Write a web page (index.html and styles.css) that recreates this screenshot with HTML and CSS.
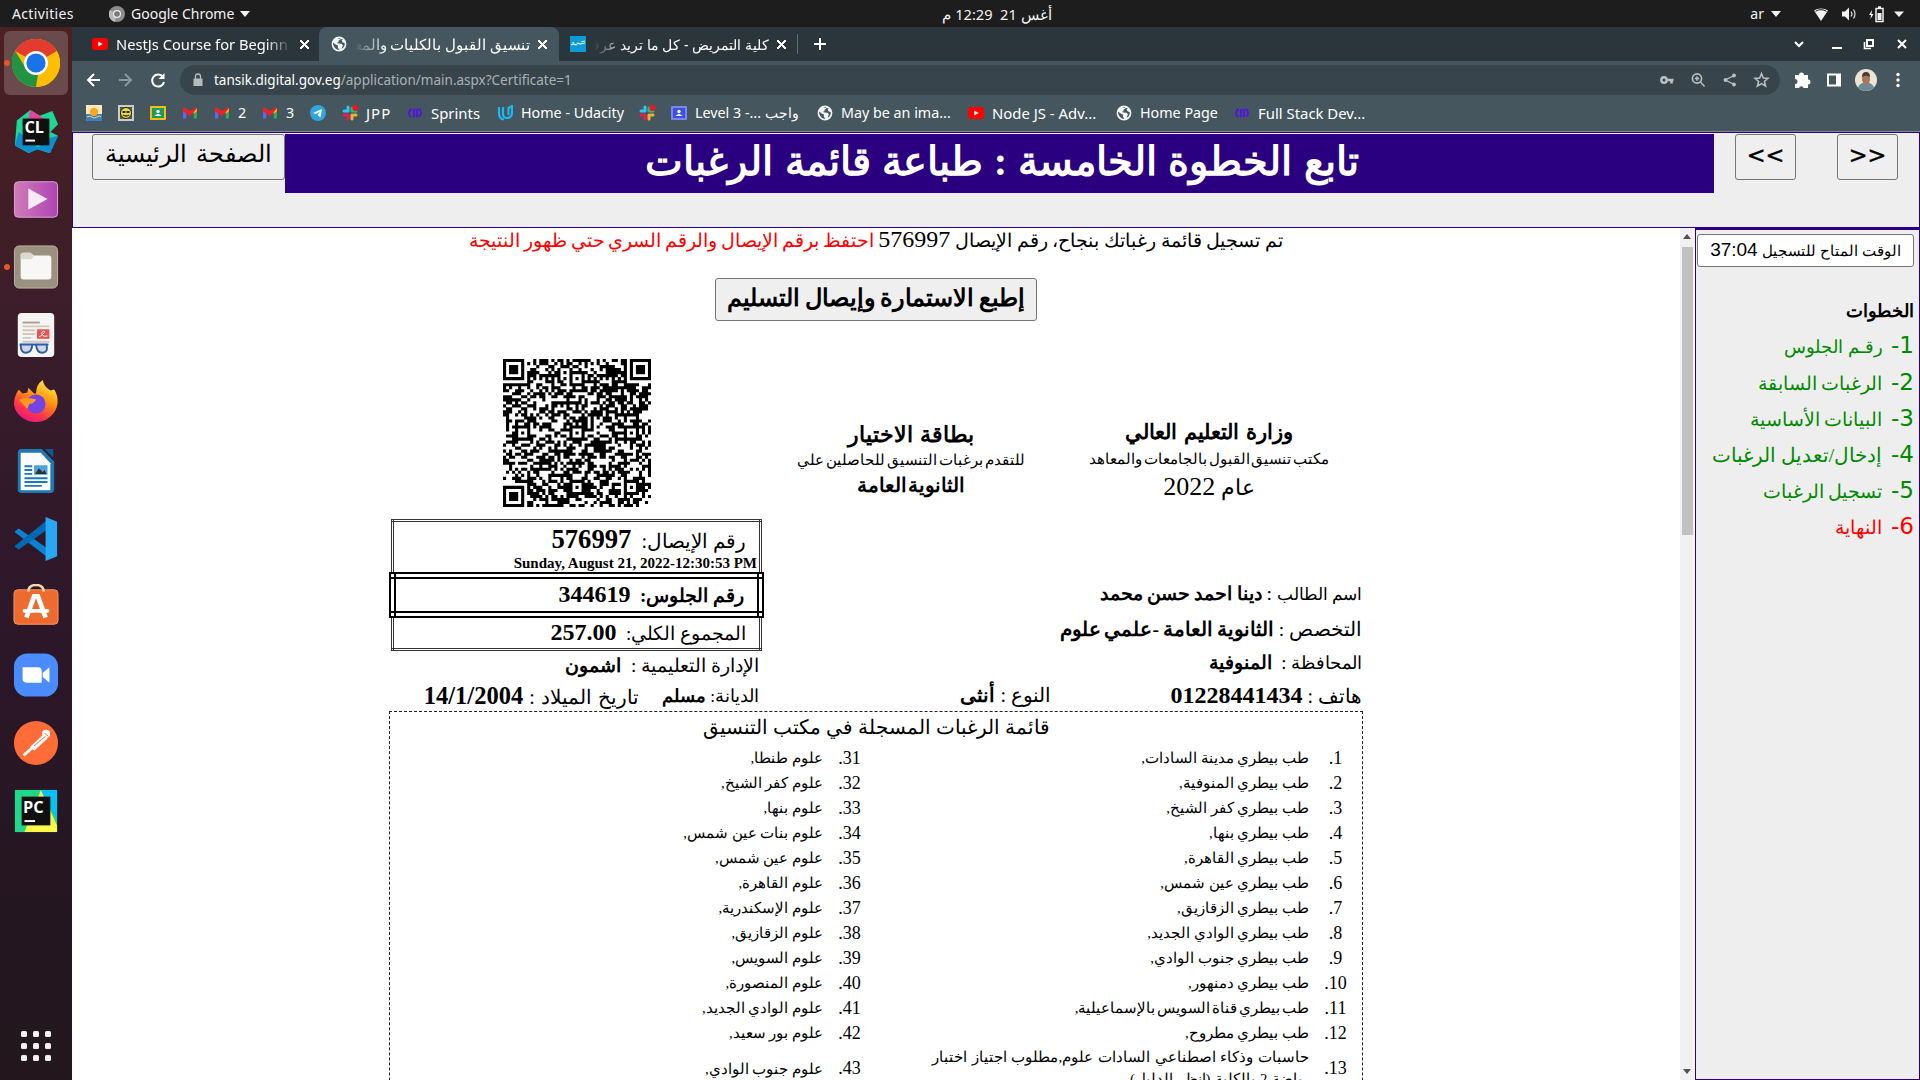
FILE: index.html
```html
<!DOCTYPE html>
<html lang="ar">
<head>
<meta charset="utf-8">
<title>تنسيق القبول بالكليات والمعاهد</title>
<link rel="stylesheet" href="styles.css">
</head>
<body>
<svg width="0" height="0" class="defs">
  <symbol id="i-yt" viewBox="0 0 16 16"><rect y="2" width="16" height="12" rx="3" fill="#f00"/><path d="M6.3 5.6v4.8L10.6 8z" fill="#fff"/></symbol>
  <symbol id="i-globe" viewBox="0 0 16 16"><circle cx="8" cy="8" r="7.4" fill="#f4f5f5"/><path d="M2 6.500l3 2.200 1.800.6v2l1.400 2.600C4.500 13.700 2 10.500 2 6.500zM6.200 2.400L8.800 2l.7 1.600-2 1.200v1.400L5.600 7l2.400.6 2.400.2 1.600 1.500-1.500 3.500c2.200-1 3.500-3.200 3.300-5.600l-2.300-1-.8-1.600 1.100-1.300" fill="#45565e"/></symbol>
  <symbol id="i-gmail" viewBox="0 0 16 16"><path d="M1 4v9.500h3.300V7z" fill="#5a6bf0"/><path d="M15 4v9.500h-3.300V7z" fill="#34a853"/><path d="M11.700 4.300L15 3v3.200l-3.300 2.500z" fill="#fbbc04"/><path d="M1 6.200V3.600C1 2.500 2.300 2 3.200 2.700L8 6.300l4.800-3.600C13.700 2 15 2.500 15 3.600L8 10.900z" fill="#f01f2a"/></symbol>
  <symbol id="i-slack" viewBox="0 0 16 16" fill="none"><g stroke-width="3" stroke-linecap="round"><path d="M6 2v4M2 6h2" stroke="#36c5f0"/><path d="M10 6h4M10 6V3" stroke="#2eb67d"/><path d="M10 10v4M12 10h2" stroke="#ecb22e"/><path d="M2 10h4M6 11v3" stroke="#e01e5a"/></g><circle cx="13.500" cy="3" r="3" fill="#f5121c"/></symbol>
  <symbol id="i-sprints" viewBox="0 0 16 16"><path d="M5 4.500Q2 5 2 8T4 12M8.500 4Q6 5 7 8T6 12.200M9 12Q11 11 10 8t1.500-4M12 11.500q2-1 2-3.500T12.500 4" stroke="#5310ea" stroke-width="1.800" fill="none"/></symbol>
</svg>

<header class="topbar">
  <span class="activities">Activities</span>
  <svg class="app-ico" viewBox="0 0 16 16"><circle cx="8" cy="8" r="8" fill="#8d8d8d"/><path d="M8 8L1 4a8 8 0 0 0 5 12z" fill="#b9b9b9"/><circle cx="8" cy="8" r="4" fill="#eee"/><circle cx="8" cy="8" r="2.800" fill="#777"/></svg>
  <span class="app-name">Google Chrome</span><i class="caret"></i>
  <span class="clock" dir="rtl">أغس 21&nbsp; 12:29 م</span>
  <span class="lang">ar</span><i class="caret lang-caret"></i>
  <svg class="sys" viewBox="0 0 100 20"><path d="M2 6.500a10 7 0 0 1 14 0L9 17z" fill="#f2f2f2"/><path d="M3.500 7.300a8 6 0 0 1 11 0" stroke="#1d1d1d" fill="none"/><path d="M30 7.500h3l4-4v13l-4-4h-3z" fill="#f2f2f2"/><path d="M39 7.500q2 2.500 0 5M41.500 5.500q3 4.500 0 9" stroke="#ddd" fill="none" stroke-width="1.200"/><path d="M60 6l-3 5h2l-.5 4 3-5h-2z" fill="#f2f2f2"/><path d="M64 4.500h7v13h-7zM66 3h3" fill="none" stroke="#f2f2f2" stroke-width="1.500"/><path d="M65.500 9h4v7h-4z" fill="#f2f2f2"/><path d="M82 7.500h10l-5 5.500z" fill="#f2f2f2"/></svg>
</header>

<div class="desktop">
<nav class="dock">
  <div class="slot active"><i class="pip"></i><svg viewBox="0 0 48 48"><circle cx="24" cy="24" r="24" fill="#fdbd00"/><path d="M24 24L3.200 12A24 24 0 0 1 44.800 12z" fill="#e33b2e"/><path d="M3.200 12L14 29.500l10 5.500 2 .5L24 48A24 24 0 0 1 3.200 12z" fill="#229342"/><path d="M24 48l10.400-18L44.800 12A24 24 0 0 1 24 48z" fill="#fdbd00"/><circle cx="24" cy="24" r="12" fill="#fff"/><circle cx="24" cy="24" r="9.600" fill="#1a73e8"/></svg></div>
  <div class="slot"><svg viewBox="0 0 48 48"><path d="M4 13l14-11 10 6 13-5 6 14-8 8 8 4-9 18-13-4-9 4L2 39z" fill="#1fd796"/><path d="M2 39l4-14 20 16 13-10 8-2-8 18-13-4-9 4z" fill="#0a8fd0"/><path d="M18 2l-2 10h18z" fill="#e8439b"/><rect x="10" y="11" width="28" height="28" fill="#101010"/><rect x="13" y="33" width="10" height="2" fill="#fff"/><text x="12" y="26" class="logo-t">CL</text></svg></div>
  <div class="slot"><svg viewBox="0 0 48 48"><defs><linearGradient id="g1"><stop offset="0" stop-color="#cf7cb8"/><stop offset="1" stop-color="#ae45b4"/></linearGradient></defs><rect x="1.500" y="6" width="45" height="37" rx="4" fill="url(#g1)" stroke="#e0a5da"/><path d="M16 13v22l20-11z" fill="#f5eaf6"/></svg></div>
  <div class="slot"><i class="pip"></i><svg viewBox="0 0 48 48"><rect x="1.500" y="2" width="45" height="44" rx="5" fill="#9b917f" stroke="#bdb5a4"/><path d="M8 12q0-3 3-3h7l4 3h15q3 0 3 3v19q0 3-3 3H11q-3 0-3-3z" fill="#f8f7f6"/><path d="M8 12q0-3 3-3h7l4 3-3 4H8z" fill="#dcd8cf"/></svg></div>
  <div class="slot"><svg viewBox="0 0 48 48"><rect x="5" y="1" width="38" height="46" rx="4" fill="#f6f5f4"/><path d="M10 11h18" stroke="#aaa08f" stroke-width="2"/><path d="M10 15h28M10 19h13M10 23h13M10 27h9M10 31h28" stroke="#cfc9bd" stroke-width="2"/><rect x="25" y="18" width="13" height="10" fill="#ed5353"/><path d="M27 26c3-1 8-6 5-6s-3 7 4 5" stroke="#fff" fill="none"/><path d="M7 34h30" stroke="#2a5db0" stroke-width="2" fill="none"/><path d="M8 34q0 9 6 8.500t6-8.500zM24 34q1 9 7 8.500t4-8.500z" fill="#cfd8e4" stroke="#2a5db0" stroke-width="2"/></svg></div>
  <div class="slot"><svg viewBox="0 0 48 48"><defs><linearGradient id="g2" x1=".8" y1="0" x2=".3" y2="1"><stop offset="0" stop-color="#fff44f"/><stop offset=".4" stop-color="#ff980e"/><stop offset=".75" stop-color="#ff3647"/><stop offset="1" stop-color="#e31587"/></linearGradient></defs><path d="M6 10l4 4 5-1 1-5 6 6h2q0-9 7-14 1 7 8 11l4-1q4 6 3.500 14A23 22 0 0 1 1 26q0-9 5-16z" fill="url(#g2)"/><circle cx="24" cy="25" r="10" fill="#7542e5"/><path d="M6 20q8-2 18 0-1 4-7 5l-2 5q-5-5-9-10z" fill="#ff9a1f"/></svg></div>
  <div class="slot"><svg viewBox="0 0 48 48"><path d="M9 1h21l13 13v29q0 4-4 4H9q-4 0-4-4V5q0-4 4-4z" fill="#1b79b3"/><path d="M33 1h9v9z" fill="#0d5c91"/><path d="M8 5h21l10 11v28H8z" fill="#fbfbfb"/><path d="M12 19h8M12 23h8M12 27h8M12 31.500h24M12 35.500h24M12 39.500h18" stroke="#1b79b3" stroke-width="2"/><rect x="22" y="18" width="14" height="10" fill="#4ea4dc"/><path d="M23 27l4-6 4 4 2-2 2 4z" fill="#2e3436"/></svg></div>
  <div class="slot"><svg viewBox="0 0 48 48"><path d="M2 16l4-3 30 21v9L2 17z" fill="#0a84d0"/><path d="M2 32l4 3L36 14V4L2 31z" fill="#0069b1"/><path d="M34 1l12 5v36l-12 5z" fill="#28a7f2"/></svg></div>
  <div class="slot"><svg viewBox="0 0 48 48"><rect x="1" y="6" width="46" height="36" rx="4" fill="#ee6b2f" stroke="#f59a67"/><path d="M16 8q0-7 8-7t8 7" fill="none" stroke="#f3d9ab" stroke-width="2.500"/><path d="M14 35l8-22h4l8 22" fill="none" stroke="#fff" stroke-width="5"/><path d="M12 28h24" stroke="#fff" stroke-width="4" stroke-linecap="round"/></svg></div>
  <div class="slot"><svg viewBox="0 0 48 48"><rect x="1" y="1.500" width="46" height="45" rx="14" fill="#4a8cfd"/><path d="M10 16h16q4 0 4 4v12H14q-4 0-4-4z" fill="#fff"/><path d="M31 22l7-6v16l-7-6z" fill="#fff"/></svg></div>
  <div class="slot"><svg viewBox="0 0 48 48"><circle cx="24" cy="24" r="23" fill="#ff6c37"/><path d="M34 17L20 30" stroke="#fff" stroke-width="6"/><path d="M20 29L11 37" stroke="#fff" stroke-width="3"/><circle cx="34.500" cy="14.500" r="4.200" fill="#fff"/><path d="M22 27l12-10M33 14l4 3" stroke="#ff6c37"/></svg></div>
  <div class="slot"><svg viewBox="0 0 48 48"><rect x="2" y="2" width="44" height="44" fill="#21d789"/><path d="M28 2h18v31z" fill="#07c3f2"/><path d="M29 2l17 37v7H12z" fill="#fcf84a"/><rect x="9" y="9" width="30" height="30" fill="#101010"/><rect x="12" y="33.500" width="11" height="2" fill="#fff"/><text x="10.500" y="26" class="logo-t">PC</text></svg></div>
  <svg class="apps" viewBox="0 0 30 30" fill="#f2f1f0"><rect width="6" height="6" rx="1.500"/><rect x="12" width="6" height="6" rx="1.500"/><rect x="24" width="6" height="6" rx="1.500"/><rect y="12" width="6" height="6" rx="1.500"/><rect x="12" y="12" width="6" height="6" rx="1.500"/><rect x="24" y="12" width="6" height="6" rx="1.500"/><rect y="24" width="6" height="6" rx="1.500"/><rect x="12" y="24" width="6" height="6" rx="1.500"/><rect x="24" y="24" width="6" height="6" rx="1.500"/></svg>
</nav>

<div class="browser">
  <div class="tabs">
    <div class="tab"><svg class="ico"><use href="#i-yt"/></svg><span class="tab-t">NestJs Course for Beginn</span><b class="x"></b></div>
    <div class="tab current"><svg class="ico"><use href="#i-globe"/></svg><span class="tab-t" dir="rtl">تنسيق القبول بالكليات والمعـ</span><b class="x"></b></div>
    <div class="tab third"><svg class="ico" viewBox="0 0 16 16"><rect width="16" height="16" fill="#0a9bd8"/><path d="M1 9l3-1 2 1 2-2 2 1 5-1M2 7l2-.5M11 6l4-1" stroke="#d5f0fb" fill="none" stroke-width="1.200"/></svg><span class="tab-t" dir="rtl">كلية التمريض - كل ما تريد عرف</span><b class="x"></b></div>
    <svg class="plus" viewBox="0 0 12 12"><path d="M6 0v12M0 6h12" stroke="#fff" stroke-width="2"/></svg>
    <svg class="win" viewBox="0 0 120 20"><path d="M6 8l4 4 4-4" stroke="#fff" stroke-width="2" fill="none"/><path d="M43 14h10" stroke="#fff" stroke-width="2"/><path d="M78 6h6v6h-6z" stroke="#fff" stroke-width="2" fill="none"/><path d="M75.500 8v6.500H82" stroke="#fff" stroke-width="1.600" fill="none"/><path d="M109 6l8 8M117 6l-8 8" stroke="#fff" stroke-width="2"/></svg>
  </div>
  <div class="toolbar">
    <svg class="nav" viewBox="0 0 96 30" fill="none" stroke="#fff" stroke-width="2"><path d="M21 15H9M15 9l-6 6 6 6"/><path d="M40 15h12M46 9l6 6-6 6" stroke="#8b979c"/><path d="M84 12a6 6 0 1 0 1 5"/><path d="M85.500 8v6h-6z" fill="#fff" stroke="none"/></svg>
    <div class="omnibox">
      <svg class="lock" viewBox="0 0 10 14"><path d="M.5 5.500h9V13h-9z" fill="#b4bbbf"/><path d="M2.500 6V3.500a2.500 2.500 0 0 1 5 0V6" stroke="#b4bbbf" fill="none" stroke-width="1.300"/></svg>
      <span class="url">tansik.digital.gov.eg<i>/application/main.aspx?Certificate=1</i></span>
      <svg class="omni-r" viewBox="0 0 120 24" fill="none" stroke="#b9c0c4" stroke-width="1.600"><circle cx="8" cy="12" r="2.700" stroke-width="2.400"/><path d="M11 12h6.500M15.500 12v3.500" stroke-width="2.600"/><circle cx="41" cy="10.500" r="4.600"/><path d="M44.500 14l4 4.500M38.800 10.500h4.400M41 8.300v4.400" stroke-width="1.400"/><path d="M78 7.500l-8.500 4.500 8.500 4.500" stroke-width="1.400"/><g fill="#b9c0c4" stroke="none"><circle cx="78" cy="7.500" r="1.900"/><circle cx="69.500" cy="12" r="1.900"/><circle cx="78" cy="16.500" r="1.900"/></g><path d="M105.500 5.500l1.800 4.500 4.700.4-3.600 3.100 1.200 4.700-4.100-2.600-4.100 2.600 1.200-4.700-3.600-3.100 4.700-.4z" stroke-width="1.500"/></svg>
    </div>
    <svg class="ext" viewBox="0 0 120 30"><path d="M5 10h4a2.500 2.500 0 1 1 5 0h4v4.500a2.500 2.500 0 1 1 0 5V23h-4.500a2.300 2.300 0 0 0-4.500 0H5v-4a2.300 2.300 0 0 0 0-5z" fill="#fff"/><path d="M38 9.500h12v11H38z" fill="none" stroke="#fff" stroke-width="2"/><path d="M46 9h5v12h-5z" fill="#fff"/><circle cx="76" cy="15" r="11" fill="#e9e4d6"/><path d="M68 22.500q2-5 8-5t8 5a11 11 0 0 1-16 0z" fill="#6d8a94"/><ellipse cx="76" cy="14" rx="4" ry="5.500" fill="#a87756"/><path d="M72 12q0-5 4-5t4 5l-4-1.500z" fill="#463a33"/><g fill="#fff"><circle cx="108" cy="9.500" r="1.700"/><circle cx="108" cy="15" r="1.700"/><circle cx="108" cy="20.500" r="1.700"/></g></svg>
  </div>
  <div class="bookmarks">
    <a><svg class="ico" viewBox="0 0 16 16"><rect width="16" height="9" fill="#fbe9bd"/><rect y="9" width="16" height="7" fill="#3f7fbf"/><circle cx="8" cy="7" r="4" fill="#fba61b"/><path d="M1 12q3-2 5 0t5 0 4 0" stroke="#f4d37b" fill="none"/></svg></a>
    <a><svg class="ico" viewBox="0 0 16 16"><rect width="16" height="16" fill="#ccc"/><rect x="2" y="2" width="12" height="12" fill="#555"/><circle cx="8" cy="8" r="5.500" fill="#eae32a" stroke="#222"/><path d="M4.500 7h3M8.500 7h3" stroke="#222" stroke-width="2"/><path d="M5 10q3 2 6 0" stroke="#222" fill="none" stroke-width="1.300"/></svg></a>
    <a><svg class="ico" viewBox="0 0 16 16"><rect y="1" width="16" height="14" rx="1" fill="#f7ba17"/><rect x="2" y="3" width="12" height="10" fill="#1d9b5b"/><circle cx="8" cy="6.500" r="1.700" fill="#fff"/><path d="M4.500 11q3.500-4 7 0z" fill="#fff"/></svg></a>
    <a><svg class="ico"><use href="#i-gmail"/></svg></a>
    <a><svg class="ico"><use href="#i-gmail"/></svg>2</a>
    <a><svg class="ico"><use href="#i-gmail"/></svg>3</a>
    <a><svg class="ico" viewBox="0 0 16 16"><circle cx="8" cy="8" r="8" fill="#31a5e0"/><path d="M3 8l9-4-1.500 8.500L7.500 10l3-4-4.500 3z" fill="#fff"/></svg></a>
    <a class="caps"><svg class="ico"><use href="#i-slack"/></svg>JPP</a>
    <a class="wide"><svg class="ico"><use href="#i-sprints"/></svg>Sprints</a>
    <a><svg class="ico" viewBox="0 0 16 16" fill="none" stroke="#1fb6f2" stroke-width="2.200"><path d="M2 2v6q0 6 5 6.500"/><path d="M6 2v7q0 4 4 4 5 0 5-6V1l-3.500 2v7"/></svg>Home - Udacity</a>
    <a><svg class="ico"><use href="#i-slack"/></svg></a>
    <a><svg class="ico" viewBox="0 0 16 16"><rect y="1" width="16" height="14" rx="1" fill="#7a86f5"/><rect x="2" y="3" width="12" height="10" fill="#3c4fe0"/><circle cx="8" cy="6.500" r="1.700" fill="#fff"/><path d="M4.500 11q3.500-4 7 0z" fill="#fff"/></svg><span>Level 3 -... واجب</span></a>
    <a><svg class="ico"><use href="#i-globe"/></svg>May be an ima...</a>
    <a class="wide"><svg class="ico"><use href="#i-yt"/></svg>Node JS - Adv...</a>
    <a><svg class="ico"><use href="#i-globe"/></svg>Home Page</a>
    <a class="wide"><svg class="ico"><use href="#i-sprints"/></svg>Full Stack Dev...</a>
  </div>

  <div class="page">
    <div class="banner">
      <button class="home">الصفحة الرئيسية</button>
      <h1 dir="rtl">تابع الخطوة الخامسة : طباعة قائمة الرغبات</h1>
      <button class="step">&lt;&lt;</button>
      <button class="step last">&gt;&gt;</button>
    </div>
    <div class="frames">
      <main dir="rtl">
        <p class="msg">تم تسجيل قائمة رغباتك بنجاح، رقم الإيصال <span class="n">576997</span> <span class="red">احتفظ برقم الإيصال والرقم السري حتي ظهور النتيجة</span></p>
        <button class="print">إطبع الاستمارة وإيصال التسليم</button>
        <div class="head">
          <div class="org"><b>وزارة التعليم العالي</b><span class="sm">مكتب تنسيق القبول بالجامعات والمعاهد</span><span class="yr">عام <span class="n">2022</span></span></div>
          <div class="card"><b>بطاقة الاختيار</b><span class="sm">للتقدم برغبات التنسيق للحاصلين علي</span><b class="b2">الثانوية العامة</b></div>
          <svg class="qr" viewBox="0 0 49 49"><path id="qr"/></svg>
        </div>
        <div class="info">
          <div class="who">
            <p class="name"><span class="tight">اسم الطالب</span> : <b>دينا احمد حسن محمد</b></p>
            <p class="track"><span class="loose">التخصص</span> : <b>الثانوية العامة -علمي علوم</b></p>
            <p class="gov"><span class="tight">المحافظة</span> :&nbsp; <b>المنوفية</b></p>
            <p class="pair"><span class="tel">هاتف : <b class="n">01228441434</b></span><span>النوع : <b>أنثى</b></span></p>
          </div>
          <div class="side">
            <table class="receipt">
              <tr class="r1"><td><p>رقم الإيصال:&nbsp; <b class="n">576997</b></p><b class="date" dir="ltr">Sunday, August 21, 2022-12:30:53 PM</b></td></tr>
              <tr class="r2"><td><b>رقم الجلوس:&nbsp; <span class="n">344619</span></b></td></tr>
              <tr class="r3"><td>المجموع الكلي:&nbsp; <b class="n">257.00</b></td></tr>
            </table>
            <p class="l1">الإدارة التعليمية :&nbsp; <b>اشمون</b></p>
            <p class="l2"><span>الديانة: <b>مسلم</b></span><span class="born">تاريخ الميلاد : <b class="n">14/1/2004</b></span></p>
          </div>
        </div>
        <div class="wishes">
          <h2>قائمة الرغبات المسجلة في مكتب التنسيق</h2>
          <div class="rows">
            <i>1.</i><span>طب بيطري مدينة السادات,</span><i>31.</i><span>علوم طنطا,</span>
            <i>2.</i><span>طب بيطري المنوفية,</span><i>32.</i><span>علوم كفر الشيخ,</span>
            <i>3.</i><span>طب بيطري كفر الشيخ,</span><i>33.</i><span>علوم بنها,</span>
            <i>4.</i><span>طب بيطري بنها,</span><i>34.</i><span>علوم بنات عين شمس,</span>
            <i>5.</i><span>طب بيطري القاهرة,</span><i>35.</i><span>علوم عين شمس,</span>
            <i>6.</i><span>طب بيطري عين شمس,</span><i>36.</i><span>علوم القاهرة,</span>
            <i>7.</i><span>طب بيطري الزقازيق,</span><i>37.</i><span>علوم الإسكندرية,</span>
            <i>8.</i><span>طب بيطري الوادي الجديد,</span><i>38.</i><span>علوم الزقازيق,</span>
            <i>9.</i><span>طب بيطري جنوب الوادي,</span><i>39.</i><span>علوم السويس,</span>
            <i>10.</i><span>طب بيطري دمنهور,</span><i>40.</i><span>علوم المنصورة,</span>
            <i>11.</i><span class="suez">طب بيطري قناة السويس بالإسماعيلية,</span><i>41.</i><span>علوم الوادي الجديد,</span>
            <i>12.</i><span>طب بيطري مطروح,</span><i>42.</i><span>علوم بور سعيد,</span>
            <i>13.</i><span class="two">حاسبات وذكاء اصطناعي السادات علوم,مطلوب اجتياز اختبار<br>رياضة 2 بالكلية (انظر الدليل)</span><i>43.</i><span>علوم جنوب الوادي,</span>
          </div>
        </div>
      </main>
      <div class="scroll"><i class="up"></i><i class="thumb"></i><i class="down"></i></div>
      <aside dir="rtl">
        <div class="timer">الوقت المتاح للتسجيل <span class="n">37:04</span></div>
        <h3>الخطوات</h3>
        <p class="first"><i>1-</i> رقـم الجلوس</p>
        <p><i>2-</i> الرغبات السابقة</p>
        <p><i>3-</i> البيانات الأساسية</p>
        <p class="long"><i>4-</i> إدخال/تعديل الرغبات</p>
        <p><i>5-</i> تسجيل الرغبات</p>
        <p class="red"><i>6-</i> النهاية</p>
      </aside>
    </div>
  </div>
</div>
</div>
<script src="script.js"></script>
</body>
</html>
```
FILE: styles.css
```css
*{box-sizing:border-box}
body{margin:0;height:1080px;overflow:hidden;display:flex;flex-direction:column;font-family:"Noto Sans","Open Sans",sans-serif;font-size:14px;color:#fff;background:#1d1d1d}
.defs{position:absolute}
p,h1,h2,h3{margin:0;font-weight:400}
i{font-style:normal}
button{font:inherit;color:#000;background:#efefef;border:1px solid #767676;border-radius:3px;padding:0}

.topbar{height:27px;flex:none;display:flex;align-items:center;color:#f2f2f2;background:#1d1d1d}
.activities{margin-left:12px;width:97px;letter-spacing:.35px}
.app-ico{width:16px;height:16px;margin-right:6px}
.app-name{width:104px;white-space:nowrap}
.caret{border:5px solid transparent;border-top:6px solid #f2f2f2;border-bottom:0;margin-left:5px}
.clock{margin-left:687px;width:120px;text-align:center;font-size:14.600px;white-space:nowrap}
.lang{margin-left:auto}
.lang-caret{margin-left:7px;margin-right:31px}
.sys{width:100px;height:20px;margin-right:8px}

.desktop{flex:1;display:flex;min-height:0}
.dock{width:72px;flex:none;display:flex;flex-direction:column;align-items:center;background:linear-gradient(#4a2023,#3b1d2a 28%,#2d172a 55%,#241620 85%,#23171d);padding-top:2px}
.slot{width:64px;height:64px;margin:2px 0;border-radius:6px;display:flex;align-items:center;justify-content:center;position:relative}
.slot svg{width:46px;height:46px}
.active{background:#6b4a4c}
.active svg{width:48px;height:48px}
.pip{position:absolute;left:0;top:29px;width:6px;height:6px;border-radius:50%;background:#e95420}
.logo-t{font:bold 17px "Open Sans",sans-serif;fill:#fff}
.apps{width:30px;height:30px;margin-top:auto;margin-bottom:19px}

.browser{flex:1;display:flex;flex-direction:column;min-width:0;background:#45565e}
.ico{width:16px;height:16px;flex:none}
.tabs{height:34px;flex:none;display:flex;background:#2b363c}
.tab{width:247px;padding:0 10px 0 20px;display:flex;align-items:center;gap:8px;font-size:14.700px}
.current{width:240px;padding:0 12px 0 12px;background:#45565e;border-radius:8px 8px 0 0;font-size:14.600px}
.third{width:239px;padding:0 0 0 11px;font-size:14.200px}
.third .x{margin-right:3px}
.third::after{content:"";width:1px;height:20px;background:#5f6b71}
.tab-t{flex:1;overflow:hidden;white-space:nowrap;-webkit-mask:linear-gradient(90deg,#000 85%,transparent)}
.tab-t[dir=rtl]{-webkit-mask:linear-gradient(270deg,#000 82%,transparent)}
.x{width:9px;height:9px;flex:none;background:linear-gradient(45deg,transparent 43%,#fff 43% 57%,transparent 57%),linear-gradient(-45deg,transparent 43%,#fff 43% 57%,transparent 57%)}
.plus{width:12px;height:12px;margin:11px 0 0 16px}
.win{width:120px;height:20px;margin:7px 11px 0 auto}
.toolbar{height:38px;flex:none;display:flex;align-items:center;padding-bottom:1px}
.nav{width:96px;height:30px;margin:0 4px 0 7px}
.omnibox{width:1600px;height:30px;border-radius:15px;margin-left:1px;background:#38444b;display:flex;align-items:center;padding:0 4px 0 13px}
.lock{width:10px;height:14px;margin-right:11px}
.url{flex:1;font-size:13.500px}
.url i{color:#a9b2b6}
.omni-r{width:120px;height:24px}
.ext{width:120px;height:30px;margin-left:10px}
.bookmarks{height:32.500px;flex:none;padding:0 0 4px 14px;display:grid;grid-template-columns:32px 32px 32px 32px 48px 48px 32px 65px 90px 142px 32px 146px 151px 148px 118px 140px;border-bottom:1px solid #7d8a90;align-items:center;font-size:14.300px}
.bookmarks a{display:flex;align-items:center;gap:8px;white-space:nowrap}
.bookmarks .wide{font-size:14.900px}
.bookmarks .caps{font-size:15px;letter-spacing:1px}

.page{flex:1;display:flex;flex-direction:column;color:#000;background:#fff;min-height:0;font-family:"Liberation Serif",serif}
.banner{height:96px;flex:none;display:flex;align-items:flex-start;background:#eee;border:1px solid #2a0080;padding:1px 20px 0 19px}
.home{width:193px;height:46px;font-size:24.400px;word-spacing:3px;padding-bottom:6px}
.banner h1{width:1429px;height:59px;background:#2a0080;color:#fff;font-weight:700;font-size:40.400px;word-spacing:1px;line-height:56px;text-align:center;padding-left:5px}
.banner .step{width:61px;height:46px;margin-left:21px;font:22.500px "DejaVu Sans",sans-serif;-webkit-text-stroke:.4px #000;padding-bottom:3px}
.banner .last{margin-left:41px}
.frames{flex:1;display:flex;min-height:0}
main{width:1608px;display:flex;flex-direction:column;align-items:center;font-size:19px;overflow:hidden}
.n{font-size:24px}
.red{color:red}
.msg{height:50px;line-height:23px;flex:none;font-size:18.700px}
.msg .n{font-size:24px}
.msg .red{word-spacing:-.9px}
.print{width:322px;height:43px;flex:none;font-weight:700;font-size:23.500px;word-spacing:-1px;padding-bottom:2px}
.head{width:974px;height:147px;margin-top:38px;flex:none;display:grid;grid-template-columns:308px 288px 378px}
.head>div{display:flex;flex-direction:column;align-items:center;line-height:27px;padding-top:60px}
.head .sm{font-size:14.500px;word-spacing:-2px}
.head b{font-size:21px;word-spacing:2px}
.yr{font-size:21.500px}
.yr .n{font-size:26px}
.card>b:first-child{font-size:22px;padding-top:2px;height:28px}
.head .card .sm{word-spacing:-1.500px}
.head .b2{line-height:23px;font-size:19.600px;word-spacing:-3px}
.qr{width:148px;height:148px;justify-self:center;margin-right:3px}
.info{width:974px;height:192px;margin-top:13px;flex:none;display:grid;grid-template-columns:599px 375px}
.who{padding:58px 1px 0 0}
.who p{line-height:34px;height:34px;font-size:19.600px}
.who .name{height:35px}
.name b{font-size:19px;word-spacing:-.5px}
.track b{word-spacing:-1px}
.tight{font-size:16.700px}
.loose{font-size:20.300px}
.who .gov{font-size:18.500px}
.gov .tight{font-size:17.800px}
.pair{display:flex}
.who .pair{line-height:31px;font-size:20px}
.tel{width:311px}
.receipt{border-collapse:collapse;width:375px;height:132px}
.receipt td{border:3px double #333;padding:0 13px 0 0;line-height:26px}
.receipt .r1 td{height:55px;font-size:20px}
.r1 p{line-height:30px}
.r1 .n{font-size:26.700px}
.date{display:block;font-size:15px;line-height:14px;text-align:right;margin-right:-11px}
.receipt .r2 td{border:7px double #000;line-height:24px;height:39px}
.side .l1,.side .l2{line-height:30px;height:30px;padding-right:5px}
.side .l1{font-size:19.200px}
.side .l2{display:flex;gap:23px;font-size:17.500px}
.l2 .born{font-size:20px;word-spacing:1px}
.l2 .n{font-size:24.500px}
.wishes{width:974px;height:480px;flex:none;border:1px dashed #222;font-size:14.800px}
.wishes h2{font-size:20px;line-height:31px;text-align:center;height:34px}
.rows{display:grid;grid-template-columns:27px 459px 27px 1fr;grid-template-rows:repeat(12,25px) 46px;align-items:center;padding-right:13px}
.rows>span{padding-right:13px}
.rows>i{text-align:center;font-size:18px}
.rows .suez{word-spacing:-1.800px}
.rows .two{line-height:22px;word-spacing:1px;align-self:start}
.scroll{width:14px;flex:none;background:#f1f1f1;display:flex;flex-direction:column;align-items:center;gap:8px;padding:6px 0}
.up{border:4px solid transparent;border-bottom:5px solid #505050;border-top:0}
.thumb{width:11px;height:288px;background:#c1c1c1}
.down{border:4px solid transparent;border-top:5px solid #505050;border-bottom:0;margin-top:auto}
aside{flex:1;margin-left:1px;background:#eee;border:1px solid #2a0080;border-top-width:2px;padding:4px 5px 0 1px;font-size:19px}
.timer{height:33px;background:#fff;border:1px solid #767676;border-radius:3px;font:14.600px/30px "Liberation Sans",sans-serif;text-align:center}
.timer .n{font-size:19px}
aside h3{font-weight:700;font-size:17.800px;margin-top:26px;line-height:36px}
aside p{line-height:37px;height:36px;color:#008a00}
aside .first{font-size:18px}
aside .long{font-size:19.600px}
aside p i{font:23px "DejaVu Sans",sans-serif;margin-left:4px}
aside .red{color:red}
```
FILE: script.js
```js
// Draws the code's modules: three finder squares, alignment marks, timing lines and data cells.
const size = 49;
const marks = [6, 24, 42];
let seed = 8;
const rand = () => (seed = (seed * 1103515245 + 12345) % 2147483648) / 2147483648;
const ring = (x, y, cx, cy) => Math.max(Math.abs(x - cx), Math.abs(y - cy));
let d = '';
for (let y = 0; y < size; y++) {
  for (let x = 0; x < size; x++) {
    let on = rand() < 0.52;
    if (x === 6 || y === 6) on = (x + y) % 2 === 0;
    for (const cx of marks) for (const cy of marks) {
      const r = ring(x, y, cx, cy);
      if (r <= 2) on = r !== 1;
    }
    for (const [cx, cy] of [[3, 3], [45, 3], [3, 45]]) {
      const r = ring(x, y, cx, cy);
      if (r <= 4) on = r !== 2 && r !== 4;
    }
    if (on) d += `M${x} ${y}h1.03v1.03h-1.03z`;
  }
}
document.getElementById('qr').setAttribute('d', d);
```
